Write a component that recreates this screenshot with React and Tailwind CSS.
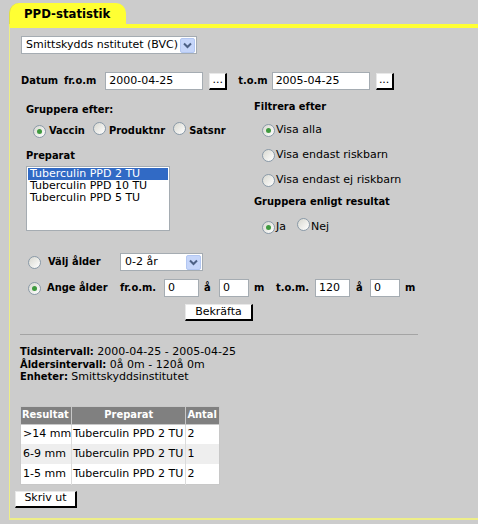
import React from "react";

const body = "font-['DejaVu_Sans',Verdana,sans-serif] text-[11px] text-black";
const lbl = "font-['DejaVu_Sans_Condensed','Liberation_Sans',sans-serif] font-bold text-[11px]";

const Radio = ({ checked }) => (
  <span className="inline-flex w-[13px] h-[13px] shrink-0 items-center justify-center rounded-full border border-[#8a9aa8] bg-[linear-gradient(135deg,#d8d8d0,#ffffff)]">
    {checked && <span className="w-[5px] h-[5px] rounded-full bg-[#3f9a3f]" />}
  </span>
);

const Arrow = () => (
  <span className="flex w-[15px] h-[15px] items-center justify-center bg-[#c6d6fa] border border-[#b3c7f2] rounded-[2px]">
    <svg width="9" height="7" viewBox="0 0 9 7">
      <path d="M1 1.5 L4.5 5 L8 1.5" fill="none" stroke="#4d6185" strokeWidth="2" />
    </svg>
  </span>
);

const Select = ({ value, w }) => (
  <div className={`flex items-center justify-between h-[18px] bg-white border border-[#a5acb2] pl-[4px] pr-[1px] ${w}`}>
    <span>{value}</span>
    <Arrow />
  </div>
);

const Input = ({ value, w }) => (
  <div className={`h-[18px] bg-white border border-[#a5acb2] px-[3px] leading-[16px] ${w}`}>{value}</div>
);

const Btn = ({ children, w }) => (
  <div className={`h-[17px] bg-white border-t border-l border-[#e8e8e8] border-r-2 border-b-2 border-r-black border-b-black flex items-center justify-center ${w}`}>
    {children}
  </div>
);

const rows = [
  ["\u003e14 mm", "Tuberculin PPD 2 TU", "2", "bg-white"],
  ["6-9 mm", "Tuberculin PPD 2 TU", "1", "bg-[#eeeeee]"],
  ["1-5 mm", "Tuberculin PPD 2 TU", "2", "bg-white"],
];

export default function App() {
  return (
    <div className={`w-full h-[524px] bg-[#cccccc] overflow-hidden ${body}`}>
      {/* flik */}
      <div className="pt-[3px] pl-[9px]">
        <div className="w-[117px] h-[21px] bg-[#ffff33] rounded-t-[10px] border-l border-[#e0e040] pl-[14px] pt-[3px] font-['DejaVu_Sans_Condensed','Liberation_Sans',sans-serif] font-bold text-[13px] leading-[15px]">
          PPD-statistik
        </div>
      </div>

      <div className="ml-[9px] h-[496px] border-t-4 border-t-[#ffff33] border-l border-l-[#eeee88] border-b-2 border-b-[#eeee88]">
        <div className="mt-[8px] ml-[11px]">
          <Select value="Smittskydds nstitutet (BVC)" w="w-[176px]" />
        </div>

        {/* Datum */}
        <div className="mt-[18px] ml-[11px] flex items-center h-[18px]">
          <span className={lbl}>Datum</span>
          <span className={`${lbl} ml-[6px]`}>fr.o.m</span>
          <div className="ml-[9px]"><Input value="2000-04-25" w="w-[98px]" /></div>
          <div className="ml-[6px]"><Btn w="w-[18px]">...</Btn></div>
          <span className={`${lbl} ml-[11px]`}>t.o.m</span>
          <div className="ml-[4px]"><Input value="2005-04-25" w="w-[98px]" /></div>
          <div className="ml-[6px]"><Btn w="w-[18px]">...</Btn></div>
        </div>

        {/* gruppering och filter */}
        <div className="mt-[10px] flex">
          <div className="ml-[16px] w-[228px] flex flex-col">
            <div className={`${lbl} mt-[3px] h-[14px] leading-[14px]`}>Gruppera efter:</div>
            <div className="mt-[6px] h-[16px] flex items-center pl-[7px]">
              <Radio checked />
              <span className={`${lbl} ml-[3px]`}>Vaccin</span>
              <span className="ml-[8px]"><Radio /></span>
              <span className={`${lbl} ml-[3px]`}>Produktnr</span>
              <span className="ml-[8px]"><Radio /></span>
              <span className={`${lbl} ml-[3px]`}>Satsnr</span>
            </div>
            <div className={`${lbl} mt-[10px] h-[14px] leading-[14px]`}>Preparat</div>
            <div className="mt-[3px] w-[144px] h-[65px] bg-white border border-[#a5acb2] p-[1px] leading-[12px]">
              <div className="bg-[#316ac5] text-white pl-[2px]">Tuberculin PPD 2 TU</div>
              <div className="pl-[2px]">Tuberculin PPD 10 TU</div>
              <div className="pl-[2px]">Tuberculin PPD 5 TU</div>
            </div>
          </div>

          <div className="flex flex-col">
            <div className={`${lbl} h-[14px] leading-[14px]`}>Filtrera efter</div>
            <div className="mt-[8px] h-[16px] flex items-center pl-[8px]">
              <Radio checked /><span className="ml-[1px]">Visa alla</span>
            </div>
            <div className="mt-[9px] h-[16px] flex items-center pl-[8px]">
              <Radio /><span className="ml-[1px]">Visa endast riskbarn</span>
            </div>
            <div className="mt-[9px] h-[16px] flex items-center pl-[8px]">
              <Radio /><span className="ml-[1px]">Visa endast ej riskbarn</span>
            </div>
            <div className={`${lbl} mt-[7px] h-[14px] leading-[14px]`}>Gruppera enligt resultat</div>
            <div className="mt-[10px] h-[16px] flex items-center pl-[8px]">
              <Radio checked /><span className="ml-[1px]">Ja</span>
              <span className="ml-[11px]"><Radio /></span><span className="ml-[1px]">Nej</span>
            </div>
          </div>
        </div>

        {/* ålder */}
        <div className="mt-[18px] ml-[18px] h-[18px] flex items-center">
          <Radio />
          <span className={`${lbl} ml-[7px] w-[72px]`}>Välj ålder</span>
          <Select value="0-2 år" w="w-[83px]" />
        </div>
        <div className="mt-[8px] ml-[18px] h-[18px] flex items-center">
          <Radio checked />
          <span className={`${lbl} ml-[6px] w-[73px]`}>Ange ålder</span>
          <span className={`${lbl} w-[44px]`}>fr.o.m.</span>
          <Input value="0" w="w-[35px]" />
          <span className={`${lbl} ml-[5px] w-[15px]`}>å</span>
          <Input value="0" w="w-[30px]" />
          <span className={`${lbl} ml-[5px] w-[22px]`}>m</span>
          <span className={`${lbl} w-[39px]`}>t.o.m.</span>
          <Input value="120" w="w-[35px]" />
          <span className={`${lbl} ml-[6px] w-[14px]`}>å</span>
          <Input value="0" w="w-[30px]" />
          <span className={`${lbl} ml-[5px]`}>m</span>
        </div>
        <div className="mt-[7px] ml-[175px]">
          <Btn w="w-[68px]">Bekräfta</Btn>
        </div>

        <div className="mt-[13px] ml-[10px] w-[398px] border-t border-[#a4a4a4]" />

        {/* sammanfattning */}
        <div className="mt-[11px] ml-[10px] leading-[12.5px]">
          <div><span className={lbl}>Tidsintervall:</span> 2000-04-25 - 2005-04-25</div>
          <div><span className={lbl}>Åldersintervall:</span> 0å 0m - 120å 0m</div>
          <div><span className={lbl}>Enheter:</span> Smittskyddsinstitutet</div>
        </div>

        <table className="mt-[22px] ml-[10px] w-[200px] border-collapse border border-[#c8c8c8]">
          <thead>
            <tr className="bg-[#808080] text-white h-[18px]">
              <th className={`${lbl} w-[51px] border border-[#c8c8c8] px-[1px] text-left`}>Resultat</th>
              <th className={`${lbl} w-[115px] border border-[#c8c8c8]`}>Preparat</th>
              <th className={`${lbl} w-[34px] border border-[#c8c8c8] px-[1px] text-left`}>Antal</th>
            </tr>
          </thead>
          <tbody>
            {rows.map((r) => (
              <tr key={r[0]} className={`${r[3]} h-[20px]`}>
                <td className="border-r border-[#dcdcdc] pl-[2px] whitespace-nowrap">{r[0]}</td>
                <td className="border-r border-[#dcdcdc] pl-[1px] whitespace-nowrap">{r[1]}</td>
                <td className="pl-[1px]">{r[2]}</td>
              </tr>
            ))}
          </tbody>
        </table>

        <div className="mt-[6px] ml-[5px]">
          <Btn w="w-[62px]">Skriv ut</Btn>
        </div>
      </div>
    </div>
  );
}
